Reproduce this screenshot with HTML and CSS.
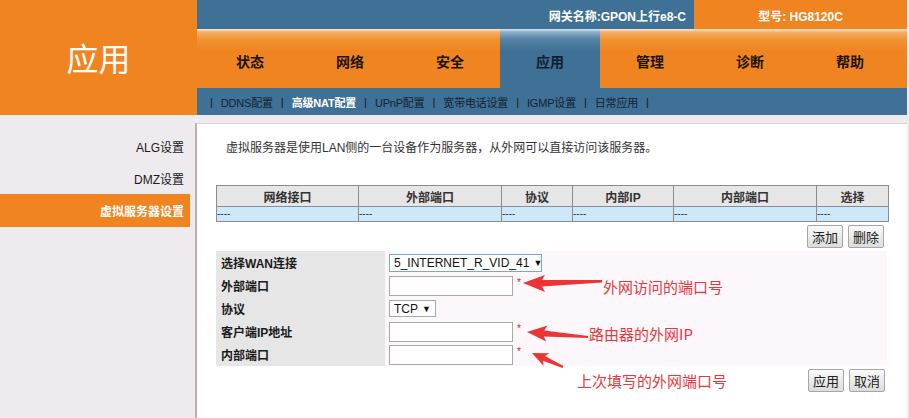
FILE: index.html
```html
<!DOCTYPE html>
<html lang="zh-CN">
<head>
<meta charset="utf-8">
<title>虚拟服务器设置</title>
<link rel="stylesheet" href="styles.css">
</head>
<body>
<div class="page">
  <header class="header">
    <div class="logo">应用</div>
    <div class="head-right">
      <div class="topbar">
        <div class="gw">网关名称:GPON上行e8-C</div>
        <div class="model">型号: HG8120C</div>
      </div>
      <nav class="tabs">
        <span class="tab">状态</span>
        <span class="tab">网络</span>
        <span class="tab">安全</span>
        <span class="tab active">应用</span>
        <span class="tab">管理</span>
        <span class="tab">诊断</span>
        <span class="tab">帮助</span>
      </nav>
      <div class="subnav">
        <span class="sep">|</span><span class="sub">DDNS配置</span>
        <span class="sep">|</span><span class="sub cur">高级NAT配置</span>
        <span class="sep">|</span><span class="sub">UPnP配置</span>
        <span class="sep">|</span><span class="sub">宽带电话设置</span>
        <span class="sep">|</span><span class="sub">IGMP设置</span>
        <span class="sep">|</span><span class="sub">日常应用</span>
        <span class="sep">|</span>
      </div>
    </div>
  </header>
  <div class="main">
    <aside class="side">
      <div class="side-item">ALG设置</div>
      <div class="side-item">DMZ设置</div>
      <div class="side-item active">虚拟服务器设置</div>
    </aside>
    <section class="content">
      <p class="desc">虚拟服务器是使用LAN侧的一台设备作为服务器，从外网可以直接访问该服务器。</p>
      <table class="list">
        <thead>
          <tr><th class="c1">网络接口</th><th class="c2">外部端口</th><th class="c3">协议</th><th class="c4">内部IP</th><th class="c5">内部端口</th><th class="c6">选择</th></tr>
        </thead>
        <tbody>
          <tr><td>----</td><td>----</td><td>----</td><td>----</td><td>----</td><td>----</td></tr>
        </tbody>
      </table>
      <div class="btns"><button class="btn">添加</button><button class="btn">删除</button></div>
      <div class="form">
        <div class="label">选择WAN连接</div>
        <div class="field"><div class="select wan">5_INTERNET_R_VID_41<span class="arr">▼</span></div></div>
        <div class="label">外部端口</div>
        <div class="field"><input class="inp" type="text"><span class="req">*</span></div>
        <div class="label">协议</div>
        <div class="field"><div class="select proto">TCP<span class="arr">▼</span></div></div>
        <div class="label">客户端IP地址</div>
        <div class="field"><input class="inp" type="text"><span class="req">*</span></div>
        <div class="label">内部端口</div>
        <div class="field"><input class="inp" type="text"><span class="req">*</span></div>
      </div>
      <div class="btns bottom"><button class="btn">应用</button><button class="btn">取消</button></div>
    </section>
  </div>
  <svg class="arrows" width="909" height="418" viewBox="0 0 909 418">
    <polygon points="523,283 545,275 542,280 602,280 602,282.5 542,286.5 545,292"/>
    <polygon points="527,332 547.6,325.6 544.2,330.4 588.1,336 587.9,338 543.8,336.4 546.3,341.6"/>
    <polygon points="532,353 549.5,353.2 544.9,356.1 563.4,366.1 562.6,367.9 542.9,360.7 543.7,366"/>
  </svg>
  <div class="note n1">外网访问的端口号</div>
  <div class="note n2">路由器的外网IP</div>
  <div class="note n3">上次填写的外网端口号</div>
</div>
</body>
</html>
```

FILE: styles.css
```css
* { box-sizing: border-box; }
html, body { margin: 0; padding: 0; }
body {
  width: 909px;
  height: 418px;
  overflow: hidden;
  background: #eeeaee;
  font-family: "Liberation Sans", "Noto Sans CJK SC", sans-serif;
  font-size: 12px;
  color: #222;
}
.page { position: relative; width: 909px; height: 418px; }

/* header */
.header { display: flex; height: 115px; }
.logo {
  width: 197px;
  height: 115px;
  background: #ef8420;
  color: #fff;
  font-family: "Noto Sans CJK SC", sans-serif;
  font-size: 32px;
  font-weight: 400;
  display: flex;
  align-items: center;
  justify-content: center;
  padding-bottom: 2px;
}
.head-right { width: 710px; display: flex; flex-direction: column; }
.topbar { height: 29px; display: flex; }
.gw {
  width: 497px;
  background: #3f7096;
  color: #fff;
  font-weight: bold;
  font-size: 12px;
  display: flex;
  align-items: center;
  justify-content: flex-end;
  padding-right: 8px;
  padding-top: 2px;
}
.model {
  width: 213px;
  background: #ef8420;
  color: #fff;
  font-weight: bold;
  font-size: 12px;
  display: flex;
  align-items: center;
  justify-content: center;
  padding-top: 2px;
}
.tabs {
  height: 59px;
  display: flex;
  padding-left: 3px;
  background: linear-gradient(#fde7d2 0, #f6b06c 3px, #f09434 10px, #ef8420 22px, #ef8420 100%);
}
.tab {
  width: 100px;
  display: flex;
  align-items: center;
  justify-content: center;
  font-family: "Noto Sans CJK SC", sans-serif;
  font-weight: bold;
  font-size: 14px;
  color: #1e1206;
  padding-top: 5px;
}
.tab.active {
  background: linear-gradient(#d6e4ef 0, #8fb0c9 3px, #5782a4 10px, #3f7096 22px, #3f7096 100%);
  color: #0e1e2c;
}
.subnav {
  height: 27px;
  background: #3f7096;
  display: flex;
  align-items: center;
  gap: 8px;
  padding-left: 13px;
  font-size: 11px;
  color: #152331;
  padding-top: 1px;
}
.sep { color: #0e1a26; }
.sub { letter-spacing: -0.2px; }
.sub.cur { color: #fff; font-weight: bold; }

/* main */
.main { display: flex; height: 303px; }
.side { width: 195px; padding-top: 15px; }
.side-item {
  width: 190px;
  height: 32px;
  display: flex;
  align-items: center;
  justify-content: flex-end;
  padding-right: 6px;
  font-size: 12px;
  color: #1a1a1a;
}
.side-item.active {
  height: 33px;
  background: #ef8420;
  color: #fff;
  font-weight: bold;
}
.content {
  width: 712px;
  margin-top: 8px;
  background: #fff;
  border-left: 2px solid #b4b2b4;
  border-top: 1px solid #d4d2d4;
  padding: 0 0 0 19px;
}
.desc {
  margin: 14px 0 0 10px;
  height: 20px;
  line-height: 20px;
  font-size: 12px;
  color: #333;
}

/* table */
.list {
  margin-top: 27px;
  width: 672px;
  border-collapse: collapse;
  table-layout: fixed;
}
.list th, .list td { border: 1px solid #8c8c8c; padding: 0; }
.list th {
  height: 21px;
  background: #e6e6e6;
  font-weight: bold;
  font-size: 12px;
  color: #333;
  text-align: center;
}
.list td {
  height: 15px;
  background: #cde7fb;
  font-size: 10px;
  line-height: 12px;
  color: #333;
  text-align: left;
}
.c1 { width: 142px; }
.c2 { width: 143px; }
.c3 { width: 71px; }
.c4 { width: 101px; }
.c5 { width: 143px; }
.c6 { width: 72px; }

.btns {
  width: 668px;
  display: flex;
  justify-content: flex-end;
  gap: 5px;
  margin-top: 3px;
}
.btns.bottom { width: 669px; margin-top: 3px; }
.btn {
  height: 23px;
  padding: 0 3px;
  min-width: 36px;
  font-family: "Liberation Sans", "Noto Sans CJK SC", sans-serif;
  font-size: 13px;
  color: #222;
  background: linear-gradient(#fafafa, #dcdcdc);
  border: 1px solid #a6a6a6;
  border-radius: 2px;
}

/* form */
.form {
  margin-top: 3px;
  width: 671px;
  display: grid;
  grid-template-columns: 169px 1fr;
  grid-auto-rows: 23px;
  background: #fbf7fb;
}
.label {
  background: #e6e6e6;
  display: flex;
  align-items: center;
  padding-left: 5px;
  font-weight: bold;
  font-size: 12px;
  color: #1a1a1a;
}
.field {
  display: flex;
  align-items: center;
  padding-left: 4px;
}
.select {
  display: flex;
  align-items: center;
  justify-content: space-between;
  background: #fff;
  font-size: 12px;
  color: #111;
  padding: 0 5px 0 4px;
  white-space: nowrap;
}
.select .arr { font-size: 9px; margin-left: 4px; }
.wan { width: 153px; height: 18px; border: 1px solid #7aa6d6; }
.proto { width: 47px; height: 17px; border: 1px solid #a9a9a9; padding-right: 4px; }
.inp {
  width: 124px;
  height: 20px;
  border: 1px solid #a9a9a9;
  margin: 0;
  padding: 0;
  background: #fff;
}
.req {
  color: #d02020;
  font-size: 10px;
  margin-left: 4px;
  margin-top: -6px;
}

/* annotations */
.arrows { position: absolute; left: 0; top: 0; pointer-events: none; }
.arrows polygon { fill: #ec3434; }
.note {
  position: absolute;
  font-family: "Noto Sans CJK SC", sans-serif;
  font-size: 15px;
  line-height: 18px;
  color: #e8383a;
  white-space: nowrap;
}
.n1 { left: 603px; top: 278px; }
.n2 { left: 589px; top: 325px; }
.n3 { left: 577px; top: 372px; }
```
